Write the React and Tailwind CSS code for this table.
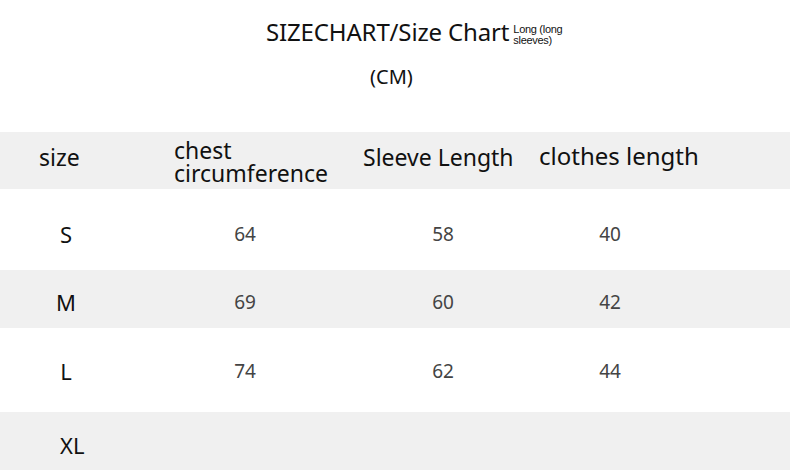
import React from 'react';

const ROWS = [
  { size: 'S', chest: '64', sleeve: '58', length: '40', h: 'h-[81px]', bg: 'bg-white', pt: 'pt-[8px]' },
  { size: 'M', chest: '69', sleeve: '60', length: '42', h: 'h-[58px]', bg: 'bg-[#f0f0f0]', pt: 'pt-[6px]' },
  { size: 'L', chest: '74', sleeve: '62', length: '44', h: 'h-[84px]', bg: 'bg-white', pt: 'pt-[2px]' },
  { size: 'XL', chest: '', sleeve: '', length: '', h: 'h-[58px]', bg: 'bg-[#f0f0f0]', pt: 'pt-[8px]' },
];

export default function App() {
  return (
    <div className="w-[790px] h-[470px] bg-white overflow-hidden text-[#111] font-['Noto_Sans',sans-serif]">
      {/* Titre */}
      <div className="h-[132px]">
        <div className="flex items-start pt-[16px] pl-[266px]">
          <span className="text-[24px] leading-[32px] tracking-[-0.15px]">SIZECHART/Size Chart</span>
          <span className="ml-[4px] mt-[8px] w-[60px] text-[11px] leading-[11px] tracking-[-0.3px] font-['Liberation_Sans',sans-serif]">Long (long sleeves)</span>
        </div>
        <div className="pl-[370px] mt-[16px] text-[20px] leading-[26px]">(CM)</div>
      </div>

      {/* En-tête */}
      <div className="flex h-[57px] bg-[#f0f0f0] items-center text-[23px]">
        <div className="w-[174px] pl-[39px] leading-[28px] pb-[8px]">size</div>
        <div className="w-[189px] leading-[23px] pt-[2px]">
          chest
          <br />
          circumference
        </div>
        <div className="w-[176px] leading-[28px] pb-[8px]">Sleeve Length</div>
        <div className="flex-1 text-[24px] leading-[28px] pb-[10px]">clothes length</div>
      </div>

      {/* Lignes */}
      {ROWS.map(r => (
        <div key={r.size} className={`flex items-center ${r.h} ${r.bg} ${r.pt}`}>
          <div className="w-[174px]">
            <div className={`text-[22px] leading-[28px] ${r.size === 'XL' ? 'pl-[60px]' : 'w-[132px] text-center'}`}>{r.size}</div>
          </div>
          <div className="w-[189px]">
            <div className="w-[142px] text-center text-[19px] leading-[28px] text-[#444]">{r.chest}</div>
          </div>
          <div className="w-[176px]">
            <div className="w-[160px] text-center text-[19px] leading-[28px] text-[#444]">{r.sleeve}</div>
          </div>
          <div className="flex-1">
            <div className="w-[142px] text-center text-[19px] leading-[28px] text-[#444]">{r.length}</div>
          </div>
        </div>
      ))}
    </div>
  );
}
